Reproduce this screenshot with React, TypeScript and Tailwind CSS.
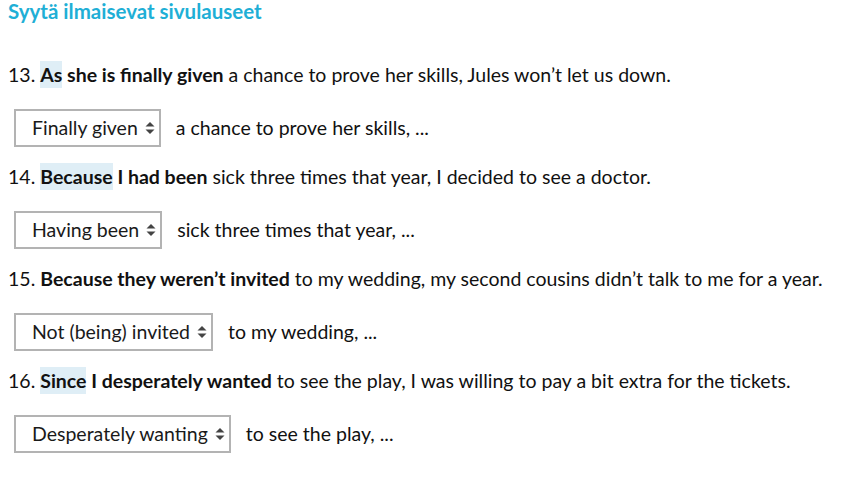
const items = [
  {
    n: 13,
    hl: "As",
    rest: " she is finally given",
    tail: " a chance to prove her skills, Jules won’t let us down.",
    choice: "Finally given",
    after: "a chance to prove her skills, ...",
  },
  {
    n: 14,
    hl: "Because",
    rest: " I had been",
    tail: " sick three times that year, I decided to see a doctor.",
    choice: "Having been",
    after: "sick three times that year, ...",
  },
  {
    n: 15,
    hl: "",
    rest: "Because they weren’t invited",
    tail: " to my wedding, my second cousins didn’t talk to me for a year.",
    choice: "Not (being) invited",
    after: "to my wedding, ...",
  },
  {
    n: 16,
    hl: "Since",
    rest: " I desperately wanted",
    tail: " to see the play, I was willing to pay a bit extra for the tickets.",
    choice: "Desperately wanting",
    after: "to see the play, ...",
  },
];

function Arrows() {
  return (
    <svg width="10" height="14" viewBox="0 0 10 14" className="ml-[7px] shrink-0">
      <path d="M5 1 L9.5 5.5 H0.5 Z" fill="#444" />
      <path d="M5 13 L9.5 8.5 H0.5 Z" fill="#444" />
    </svg>
  );
}

export default function App() {
  return (
    <div
      className="min-h-[493px] w-[843px] bg-white pl-2 text-[#111]"
      style={{ fontFamily: "Lato, 'Noto Sans', sans-serif" }}
    >
      <h2 className="text-[20.5px] font-bold leading-[22px] text-[#1fafd6]">
        Syytä ilmaisevat sivulauseet
      </h2>
      <div className="mt-[39px] flex flex-col">
        {items.map((it) => (
          <div key={it.n} className="flex flex-col">
            <p className="text-[19.5px] leading-[28px]">
              {it.n}.{" "}
              <b className="font-bold">
                {it.hl && <span className="bg-[#dfeef6] py-[2px]">{it.hl}</span>}
                {it.rest}
              </b>
              {it.tail}
            </p>
            <div className="mb-4 mt-5 flex items-center">
              <div className="ml-[6px] flex h-[38px] items-center border-2 border-[#b3b3b3] pl-4 pr-[4px] text-[19.5px] text-[#1a1a1a]">
                <span>{it.choice}</span>
                <Arrows />
              </div>
              <span className="ml-[15px] text-[19.5px]">{it.after}</span>
            </div>
          </div>
        ))}
      </div>
    </div>
  );
}
